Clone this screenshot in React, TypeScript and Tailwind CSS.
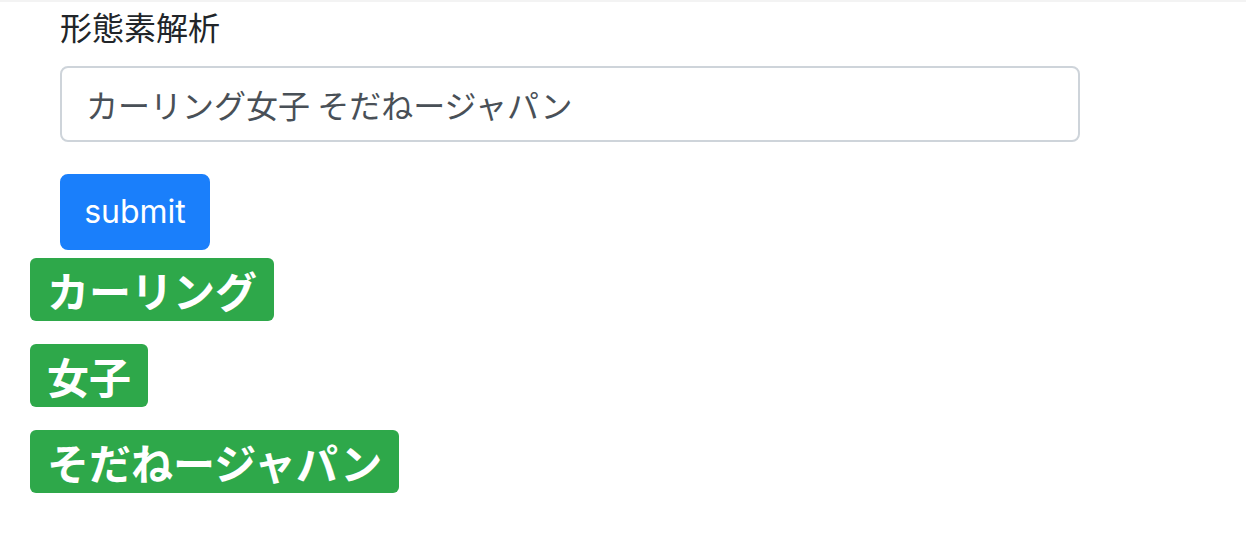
import React from "react";

const font = { fontFamily: '"Inter", "Noto Sans CJK JP", sans-serif' };

export default function App() {
  const words = ["カーリング", "女子", "そだねージャパン"];
  return (
    <div
      className="w-[1246px] h-[560px] bg-white text-[#212529] overflow-hidden"
      style={font}
    >
      <div className="h-[2px] bg-[#f3f3f3]" />
      <div className="pl-[30px]">
        <form className="pl-[30px]" onSubmit={(e) => e.preventDefault()}>
          <div className="mb-[32px]">
            <label className="block mb-[16px] text-[32px] leading-[48px] [font-family:'Noto_Sans_CJK_JP',sans-serif]">
              形態素解析
            </label>
            <input
              className="block w-[1020px] h-[76px] px-[24px] border-2 border-[#ced4da] rounded-[8px] text-[32px] text-[#495057] outline-none [font-family:'Noto_Sans_CJK_JP',sans-serif]"
              defaultValue="カーリング女子 そだねージャパン"
            />
          </div>
          <button
            type="submit"
            className="w-[150px] h-[76px] border-2 border-[#1a7ffb] bg-[#1a7ffb] rounded-[8px] text-white text-[32px] leading-[48px]"
          >
            submit
          </button>
        </form>
        <div className="mt-[8px] flex flex-col items-start gap-[23px]">
          {words.map((w) => (
            <span
              key={w}
              className="inline-block h-[63px] px-[17px] rounded-[6px] bg-[#2ea84a] text-white font-bold text-[42px] leading-[63px] [font-family:'Noto_Sans_CJK_JP',sans-serif]"
            >
              {w}
            </span>
          ))}
        </div>
      </div>
    </div>
  );
}
